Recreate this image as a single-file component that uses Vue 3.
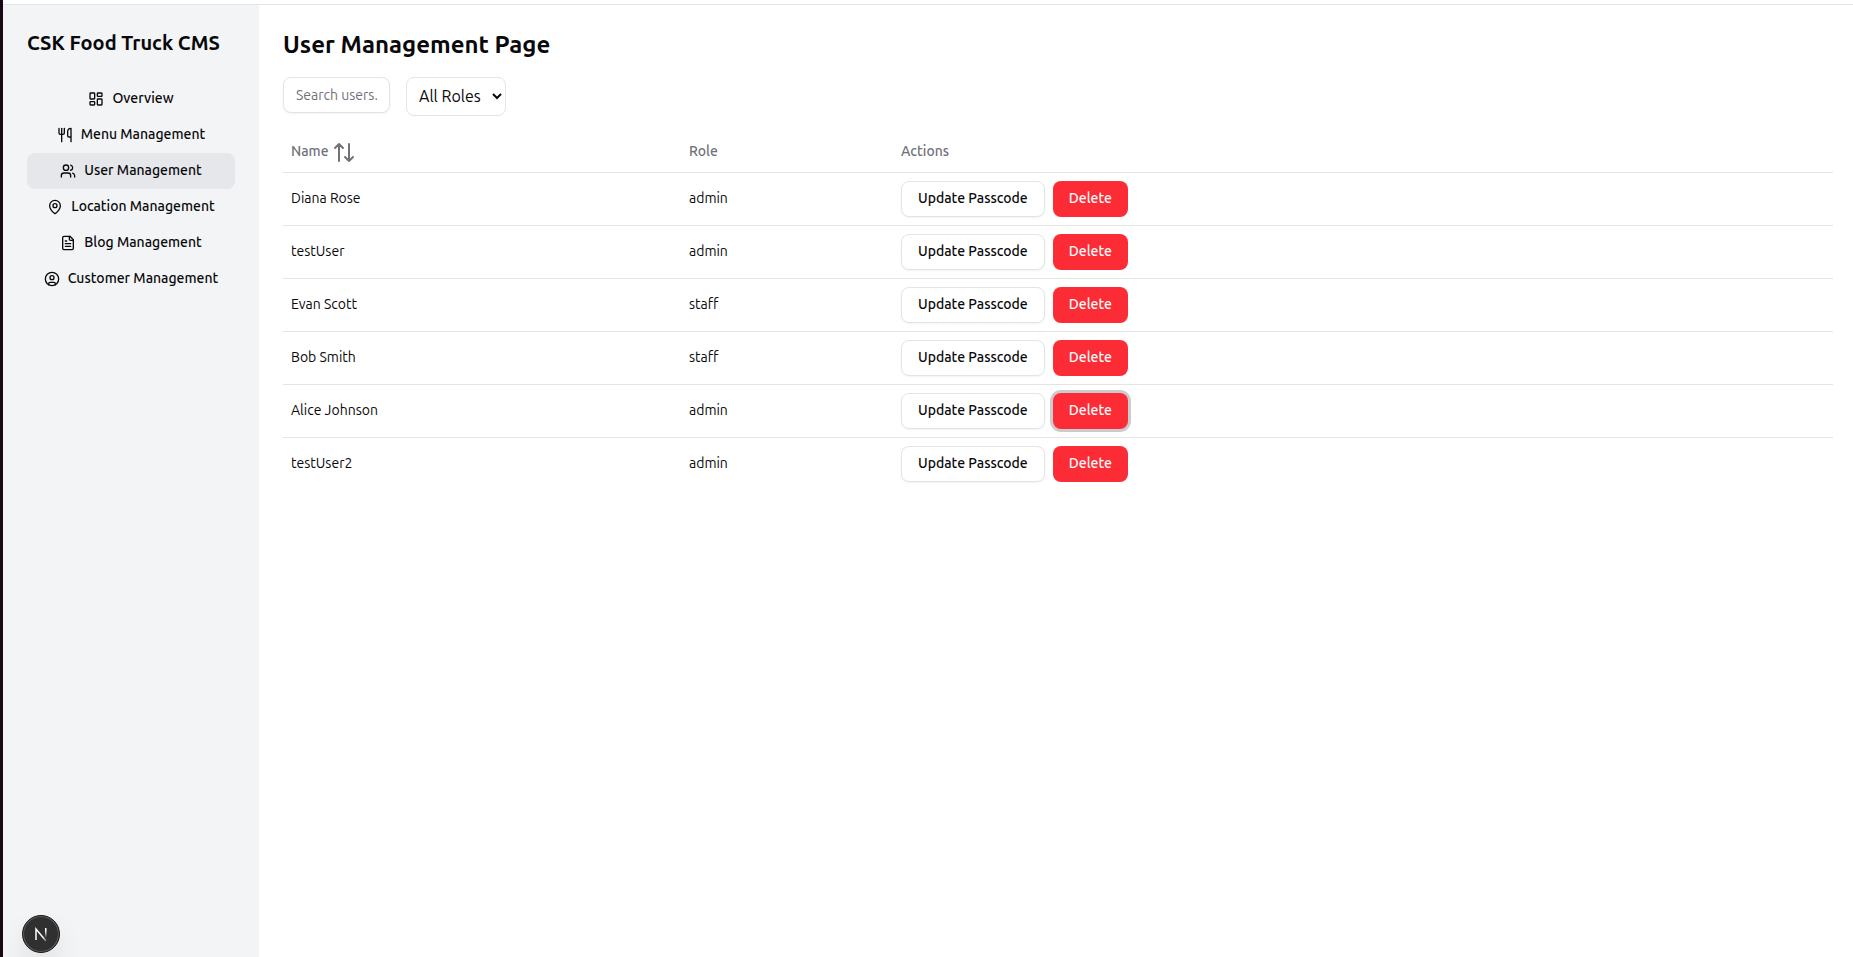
<script setup>
import { ref, computed } from 'vue'

const navItems = [
  { label: 'Overview', icon: 'dashboard' },
  { label: 'Menu Management', icon: 'utensils' },
  { label: 'User Management', icon: 'users' },
  { label: 'Location Management', icon: 'pin' },
  { label: 'Blog Management', icon: 'file' },
  { label: 'Customer Management', icon: 'profile' },
]
const icons = {
  dashboard: ['M4 3h5a1 1 0 0 1 1 1v7a1 1 0 0 1-1 1H4a1 1 0 0 1-1-1V4a1 1 0 0 1 1-1z', 'M15 3h5a1 1 0 0 1 1 1v3a1 1 0 0 1-1 1h-5a1 1 0 0 1-1-1V4a1 1 0 0 1 1-1z', 'M15 12h5a1 1 0 0 1 1 1v7a1 1 0 0 1-1 1h-5a1 1 0 0 1-1-1v-7a1 1 0 0 1 1-1z', 'M4 16h5a1 1 0 0 1 1 1v3a1 1 0 0 1-1 1H4a1 1 0 0 1-1-1v-3a1 1 0 0 1 1-1z'],
  utensils: ['M3 2v7c0 1.100.9 2 2 2h4a2 2 0 0 0 2-2V2', 'M7 2v20', 'M21 15V2a5 5 0 0 0-5 5v6c0 1.100.9 2 2 2h3Zm0 0v7'],
  users: ['M16 21v-2a4 4 0 0 0-4-4H6a4 4 0 0 0-4 4v2', 'M9 3a4 4 0 1 0 0 8a4 4 0 1 0 0-8', 'M22 21v-2a4 4 0 0 0-3-3.870', 'M16 3.130a4 4 0 0 1 0 7.750'],
  pin: ['M20 10c0 5-5.540 10.190-7.400 11.800a1 1 0 0 1-1.200 0C9.540 20.190 4 15 4 10a8 8 0 0 1 16 0', 'M12 7a3 3 0 1 0 0 6a3 3 0 1 0 0-6'],
  file: ['M15 2H6a2 2 0 0 0-2 2v16a2 2 0 0 0 2 2h12a2 2 0 0 0 2-2V7Z', 'M14 2v4a2 2 0 0 0 2 2h4', 'M10 9H8', 'M16 13H8', 'M16 17H8'],
  profile: ['M7 20.662V19a2 2 0 0 1 2-2h6a2 2 0 0 1 2 2v1.662', 'M12 7a3 3 0 1 0 0 6a3 3 0 1 0 0-6', 'M12 2a10 10 0 1 0 0 20a10 10 0 1 0 0-20'],
}

const users = [
  { name: 'Diana Rose', role: 'admin' },
  { name: 'testUser', role: 'admin' },
  { name: 'Evan Scott', role: 'staff' },
  { name: 'Bob Smith', role: 'staff' },
  { name: 'Alice Johnson', role: 'admin' },
  { name: 'testUser2', role: 'admin' },
]
const active = ref('User Management')
const search = ref('')
const role = ref('')
const focused = ref('Alice Johnson')
const direction = ref(0)

const visible = computed(() => {
  const list = users.filter(
    (u) => u.name.toLowerCase().includes(search.value.toLowerCase()) && (!role.value || u.role === role.value),
  )
  return direction.value ? list.sort((a, b) => direction.value * a.name.localeCompare(b.name)) : list
})
function toggleSort() {
  direction.value = direction.value === 1 ? -1 : 1
}
</script>

<template>
  <div class="app">
    <aside class="sidebar">
      <h2 class="brand">CSK Food Truck CMS</h2>
      <nav class="nav">
        <a
          v-for="item in navItems"
          :key="item.label"
          href="#"
          class="nav-link"
          :class="{ active: active === item.label }"
          @click.prevent="active = item.label"
        >
          <svg class="nav-icon" viewBox="0 0 24 24" aria-hidden="true">
            <path v-for="d in icons[item.icon]" :key="d" :d="d" />
          </svg>
          <span>{{ item.label }}</span>
        </a>
      </nav>
    </aside>

    <main class="main">
      <h1 class="title">User Management Page</h1>
      <div class="filters">
        <input v-model="search" class="search" type="text" placeholder="Search users..." aria-label="Search users" />
        <select v-model="role" class="roles" aria-label="Role">
          <option value="">All Roles</option>
          <option value="admin">Admin</option>
          <option value="staff">Staff</option>
        </select>
      </div>

      <table class="table">
        <colgroup>
          <col class="col-name" />
          <col class="col-role" />
          <col />
        </colgroup>
        <thead>
          <tr>
            <th>
              <button class="sort" type="button" @click="toggleSort">
                Name
                <svg class="sort-icon" viewBox="0 0 24 24" aria-hidden="true">
                  <path d="M3 8l4-4 4 4M7 4v17M21 17l-4 4-4-4M17 21V4" />
                </svg>
              </button>
            </th>
            <th>Role</th>
            <th>Actions</th>
          </tr>
        </thead>
        <tbody>
          <tr v-for="u in visible" :key="u.name">
            <td>{{ u.name }}</td>
            <td>{{ u.role }}</td>
            <td>
              <div class="actions">
                <button class="btn outline" type="button">Update Passcode</button>
                <button class="btn danger" :class="{ ring: focused === u.name }" type="button" @click="focused = u.name">
                  Delete
                </button>
              </div>
            </td>
          </tr>
        </tbody>
      </table>
    </main>

    <button class="dev-badge" type="button" aria-label="Developer tools">
      <svg viewBox="0 0 36 36" aria-hidden="true">
        <defs>
          <linearGradient id="stem" x1="0" y1="0" x2="0" y2="1">
            <stop offset="0.3" stop-color="#fff" />
            <stop offset="1" stop-color="#fff" stop-opacity="0" />
          </linearGradient>
          <linearGradient id="diagonal" gradientUnits="userSpaceOnUse" x1="13" y1="13" x2="23" y2="25">
            <stop offset="0.7" stop-color="#fff" />
            <stop offset="1" stop-color="#fff" stop-opacity="0.3" />
          </linearGradient>
        </defs>
        <path d="M13 24V13L23 25" fill="none" stroke="url(#diagonal)" stroke-width="1.5" />
        <rect x="22" y="12" width="1.5" height="10" fill="url(#stem)" />
      </svg>
    </button>
  </div>
</template>

<style>
body {
  margin: 0;
}
</style>

<style scoped>
.app {
  box-sizing: border-box;
  display: flex;
  min-height: 100vh;
  padding-top: 4px;
  border-left: 3px solid #180914;
  background: linear-gradient(#e4e4e7, #e4e4e7) 0 4px / 100% 1px no-repeat #fff;
  color: #09090b;
  font-family: 'Ubuntu Sans', Ubuntu, 'Noto Sans', sans-serif;
  font-size: 14px;
  line-height: 20px;
}
.sidebar {
  box-sizing: border-box;
  flex: 0 0 256px;
  margin-top: 1px;
  padding: 24px;
  background: #f3f4f6;
}
.brand {
  margin: 0 0 24px;
  font-size: 20px;
  font-weight: 700;
  line-height: 28px;
  white-space: nowrap;
}
.nav {
  display: flex;
  flex-direction: column;
}
.nav-link {
  display: flex;
  align-items: center;
  justify-content: center;
  gap: 8px;
  height: 36px;
  border-radius: 8px;
  color: inherit;
  font-weight: 500;
  text-decoration: none;
  white-space: nowrap;
}
.nav-link.active {
  background: #e5e7eb;
}
.nav-icon,
.sort-icon {
  fill: none;
  stroke: currentColor;
  stroke-width: 2;
  stroke-linecap: round;
  stroke-linejoin: round;
}
.nav-icon {
  width: 16px;
  height: 16px;
}
.main {
  flex: 1;
  min-width: 0;
  margin-top: 1px;
  padding: 24px 20px 24px 24px;
}
.title {
  margin: 0 0 16px;
  font-size: 24px;
  font-weight: 700;
  line-height: 32px;
}
.filters {
  display: flex;
  align-items: flex-start;
  gap: 16px;
  margin-bottom: 16px;
}
.search,
.roles {
  box-sizing: border-box;
  border: 1px solid #e4e4e7;
  border-radius: 8px;
  background: #fff;
  color: inherit;
  font-family: inherit;
}
.search {
  width: 107px;
  height: 36px;
  padding: 4px 12px;
  box-shadow: 0 1px 2px rgba(0, 0, 0, 0.05);
  font-size: 14px;
}
.search::placeholder {
  color: #71717a;
}
.roles {
  width: 100px;
  height: 39px;
  padding: 8px;
  font-size: 16px;
}
.table {
  width: 100%;
  border-collapse: separate;
  border-spacing: 0;
  table-layout: fixed;
}
.col-name {
  width: 398px;
}
.col-role {
  width: 212px;
}
th,
td {
  padding: 0 8px;
  border-bottom: 1px solid #e4e4e7;
  text-align: left;
}
th {
  height: 40px;
  color: #71717a;
  font-weight: 500;
}
td {
  height: 52px;
}
tbody tr:last-child td {
  border-bottom: 0;
}
.sort {
  display: flex;
  align-items: center;
  gap: 3px;
  padding: 0;
  border: 0;
  background: none;
  color: inherit;
  font: inherit;
}
.sort-icon {
  width: 24px;
  height: 24px;
}
.actions {
  display: flex;
  gap: 8px;
}
.btn {
  box-sizing: border-box;
  height: 36px;
  padding: 0 16px;
  border: 1px solid transparent;
  border-radius: 8px;
  font: inherit;
  font-weight: 500;
}
.outline {
  border-color: #e4e4e7;
  background: #fff;
  color: inherit;
  box-shadow: 0 1px 2px rgba(0, 0, 0, 0.05);
}
.danger {
  border: 0;
  background: #fb2c36;
  color: #fafafa;
}
.danger.ring {
  box-shadow: 0 0 0 3px #cbcbd0;
}
.dev-badge {
  position: fixed;
  bottom: 4px;
  left: 22px;
  box-sizing: border-box;
  width: 38px;
  height: 38px;
  padding: 0;
  border: 1px solid #171717;
  border-radius: 50%;
  background: #303030;
  box-shadow: inset 0 0 0 1px #606060, 0 16px 32px -8px rgba(0, 0, 0, 0.24);
}
.dev-badge svg {
  display: block;
  width: 36px;
  height: 36px;
}
</style>
